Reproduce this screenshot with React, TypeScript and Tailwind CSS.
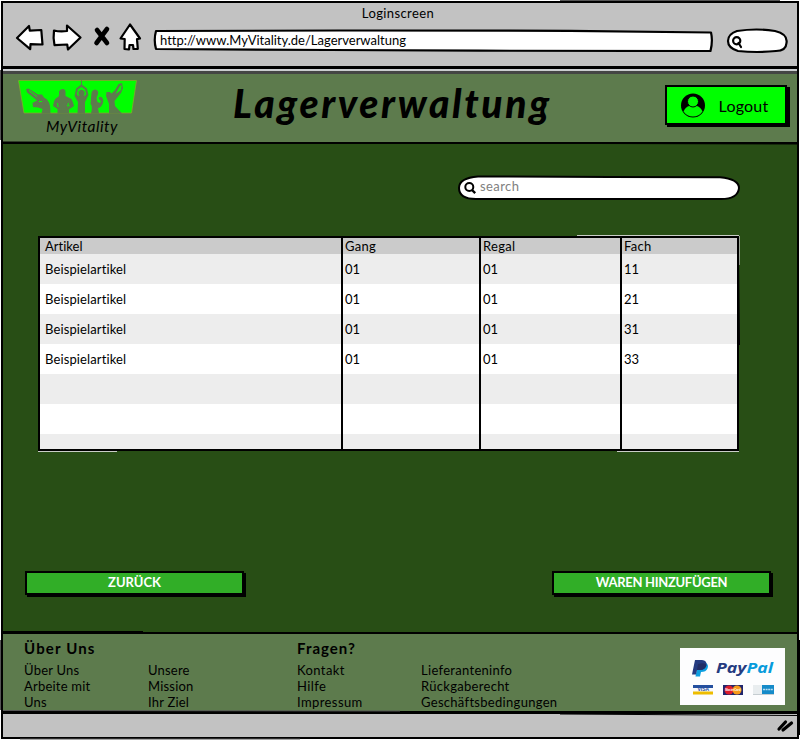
import type { ReactNode } from "react";

const rows = [
  ["Beispielartikel", "01", "01", "11"],
  ["Beispielartikel", "01", "01", "21"],
  ["Beispielartikel", "01", "01", "31"],
  ["Beispielartikel", "01", "01", "33"],
  ["", "", "", ""],
  ["", "", "", ""],
];

const columns = "grid grid-cols-[301px_138px_141px_1fr]";

function NavIcons() {
  return (
    <svg className="h-[32px] w-[130px] shrink-0" viewBox="14 21 130 32" fill="white" stroke="black" strokeWidth="2.2" strokeLinejoin="round">
      <path d="M17 37 29 25l.8 4.600 11.500-.6L42.500 43.500l-12-.4-.3 5Z" />
      <path d="M54 29.500Q60 31 67 30V24.500L80.500 36.500 68 48.500l-.8-5-12.700.6Q53 36.500 54 29.500Z" />
      <path d="m97 29 10 13M107 28 96.500 42" stroke="black" strokeWidth="4.600" strokeLinecap="round" />
      <path d="M130 23.500 140 37.500l-3 .6.800 9.700-4.300.2-.5-4h-3.500l-.5 4.500-4.500-.5.2-10-4.200-.5Z" />
    </svg>
  );
}

function AddressBar() {
  return (
    <div className="relative ml-[8px] flex h-[25px] w-[562px] items-center pl-[8px]">
      <svg className="absolute inset-0 h-full w-full" viewBox="152 28 562 25" fill="white" stroke="black" strokeWidth="2.2" strokeLinejoin="round">
        <path d="M156 32 340 31.500 570 31.800 711 33.500Q713 42 710.500 52L480 51.700 330 51 156 50Q153.500 41 156 32Z" />
      </svg>
      <span className="relative text-[13px] leading-[16px]">http://www.MyVitality.de/Lagerverwaltung</span>
    </div>
  );
}

function BrowserSearch() {
  return (
    <svg className="ml-[12px] h-[28px] w-[63px]" viewBox="726 26 63 28" fill="white" stroke="black" strokeWidth="2.2">
      <path d="M737 31Q757 28 775 31 788 34 786.500 43 786 51 776 51 757 53 738 51 728 48 728 41 728 34 737 31Z" />
      <circle cx="736.700" cy="40.800" r="3.600" fill="none" />
      <path d="m738.500 43 2.500 4" strokeLinecap="round" />
    </svg>
  );
}

function Logo() {
  return (
    <div className="w-[120px]">
      <svg className="block h-[34px] w-[119px]" viewBox="18 80 119 34">
        <path d="M18.500 80.500H136.500L131.500 113H24Z" fill="#00ff00" stroke="#8da82c" strokeWidth=".7" />
        <g fill="#5d7b4d">
          <path d="M41.500 113.500 42.500 109 38 107.500 33 107 32.500 103 37 100.500 27 92.500 26 89 28.500 88.500 38 94.500 42 94.500 44 97.500Q51 100 50.500 113.500Z" />
          <path d="m29 90.500 8 6M39 101.500h3" stroke="#00ff00" strokeWidth="1" />
          <path d="M59 95.500V91.500Q60 89 62.500 89 65.500 89 65.500 92V96L71.500 99Q73 102 74 106L69 109.500V113.500H57.500V109L53 106Q54 98 58 97Z" />
          <path d="m57.500 103 .5 4M68.500 103l-1 3 2-.5" stroke="#00ff00" strokeWidth=".9" fill="none" />
          <path d="M77.500 113.500 78 102 74.500 96 76 88.500 81 84.500V80.500H82V84.500L87 88.500 88.500 95 85 102V113.500Z" />
          <path d="M78.500 96 76.800 94 78 89.500 81.500 87 85 89.500 86.200 94 84.500 96Z" fill="#00ff00" />
          <path d="M79.500 97 78.500 94V91.500Q81.500 88 84.500 91.500V94L83.500 97Z" />
          <path d="M91 113.500Q93 106 90.500 104L91.500 93Q92 90 95 89.500 99 90 98 94L96.500 98 97.500 102 100 103 101 101.500 98.500 98.500Q99 96 101.500 97 104 99 103 103 101 108 98 108L99 113.500Z" />
          <path d="M109 113.500V104L106 96 106.500 92H110L111.500 93.500 115 90 118.500 84 122 83 123 88 121 93 114.500 101 115 106 122 113.500Z" />
          <path d="m115.500 94 4.500-8 1.500-1-.5 5Z" fill="#00ff00" />
        </g>
      </svg>
      <div className="ml-[28px] mt-[2px] h-[22px] text-[15.500px] leading-[20px] italic tracking-[0.5px]">MyVitality</div>
    </div>
  );
}

function SketchButton({ children, className }: { children: ReactNode; className: string }) {
  return (
    <button className={`relative flex items-center justify-center border-2 border-black ${className}`}>
      {children}
    </button>
  );
}

function SearchField() {
  return (
    <div className="relative flex h-[26px] w-[284px] items-center pl-[23px]">
      <svg className="absolute inset-0 h-full w-full" viewBox="457 175 284 26" fill="white" stroke="black" strokeWidth="2">
        <path d="M478 176.500 610 177 720 177.200Q739 179 739 188 738 199 721 199L476 199Q459 199 459 188 459 178 478 176.500Z" />
        <circle cx="469.300" cy="187" r="4" fill="none" />
        <path d="m472 190 3.200 3.200" strokeWidth="2.400" />
      </svg>
      <span className="relative -mt-[4px] text-[13px] leading-[16px] tracking-[0.4px] text-[#808080]">search</span>
    </div>
  );
}

function Table() {
  return (
    <div className="relative h-[215px] w-[701px] border-2 border-black bg-white text-[13px]">
      <div className={`${columns} h-[16px] bg-[#cbcbcb] leading-[17px]`}>
        {["Artikel", "Gang", "Regal", "Fach"].map((t, i) => (
          <div key={t} className={i ? "border-l-2 border-black pl-[2px] tracking-[0.3px]" : "pl-[5px]"}>{t}</div>
        ))}
      </div>
      {rows.map((row, r) => (
        <div key={r} className={`${columns} h-[30px] leading-[30px] ${r % 2 ? "bg-white" : "bg-[#ededed]"}`}>
          {row.map((t, i) => (
            <div key={i} className={i ? "border-l-2 border-black pl-[2px]" : "pl-[5px] tracking-[0.120px]"}>{t}</div>
          ))}
        </div>
      ))}
      <div className={`${columns} h-[15px] bg-[#ededed]`}>
        {[0, 1, 2, 3].map((i) => (
          <div key={i} className={i ? "border-l-2 border-black" : ""} />
        ))}
      </div>
      <svg className="absolute -top-[3px] -left-[3px] h-[217px] w-[703px]" viewBox="0 0 703 217" fill="none" strokeWidth="1">
        <path d="M540 .5H702M1 216.500H80M580 216.500H702" stroke="#c9cdc7" />
        <path d="M702.500 1V30" stroke="#9aa595" />
        <path d="m2 1.500 200 .5M701.500 20l1 90" stroke="black" />
      </svg>
    </div>
  );
}

function PayPal() {
  return (
    <div className="mt-[14px] flex h-[57px] w-[105px] flex-col bg-[#fdfdfe] pl-[12px] pt-[10px]">
      <div className="flex h-[20px] items-center">
        <svg className="h-[18px] w-[17px]" viewBox="0 0 17 18">
          <path d="M6 4h8q3 2 1.500 5.500Q14 13 9 13L8 17.500H3.500Z" fill="#0e9fe0" />
          <path d="M3 1h7q5 .3 4.500 5-1 5-7 5H5L4 15.500H0Z" fill="#253b80" />
          <path d="M6 5q7-2 8.500 1-1 5-7 5H5Z" fill="#222d65" />
        </svg>
        <span className="ml-[7px] flex origin-left scale-x-[1.220] font-['Open_Sans'] text-[14.500px] leading-[18px] font-bold italic"><span className="text-[#253b80]">Pay</span><span className="text-[#079bdc]">Pal</span></span>
      </div>
      <div className="ml-px mt-[7px] flex gap-[10px]">
        <svg className="h-[10px] w-[20px]" viewBox="0 0 20 10">
          <path d="M0 0h20v10H0Z" fill="#f8f9fc" /><path d="M0 0h20v3H0Z" fill="#244f9e" /><path d="M0 6.500h20v3H0Z" fill="#eebd00" />
          <text x="4.500" y="6.300" fontSize="5" fontWeight="bold" fill="#244f9e" fontFamily="Liberation Sans, sans-serif">VISA</text>
        </svg>
        <svg className="h-[10px] w-[20px]" viewBox="0 0 20 10">
          <path d="M0 0h20v10H0Z" fill="#20266d" /><circle cx="6" cy="5" r="4.500" fill="#dd1c2c" /><circle cx="14" cy="5" r="4.500" fill="#f79b19" />
          <text x="2.200" y="6" fontSize="3" textLength="15.500" lengthAdjust="spacingAndGlyphs" fontWeight="bold" fill="white" fontFamily="Liberation Sans, sans-serif">MasterCard</text>
        </svg>
        <svg className="h-[10px] w-[21px]" viewBox="0 0 21 10">
          <path d="M0 0h9v10H0Z" fill="#e9edef" /><path d="M9 0h12v9H9Z" fill="#168bc9" /><path d="M0 9.500h21" stroke="#c6cdd1" />
          <path d="M10 4.500h10" stroke="#b9ddf2" strokeWidth="1.500" strokeDasharray="2 .6" />
        </svg>
      </div>
    </div>
  );
}

function FooterColumn({ lines, className }: { lines: string[]; className: string }) {
  return (
    <div className={className}>
      {lines.map((l) => (
        <div key={l} className="whitespace-nowrap text-[13px] leading-[16px]">{l}</div>
      ))}
    </div>
  );
}

export default function App() {
  return (
    <div className="relative h-[740px] w-[800px] overflow-hidden bg-white pl-px pt-px font-[Lato,sans-serif] text-black [font-variant-ligatures:none]">
      <div className="flex h-[738px] w-[798px] flex-col border-2 border-black">
        <header className="h-[63px] shrink-0 bg-[#c2c2c2]">
          <div className="h-[19px] pr-[4px] pt-[2px] text-center text-[13px] leading-[16px] tracking-[0.4px]">Loginscreen</div>
          <div className="flex items-start pl-[11px]">
            <NavIcons />
            <div className="pt-[5px]"><AddressBar /></div>
            <div className="pt-[4px]"><BrowserSearch /></div>
          </div>
        </header>
        <div className="h-[8px] shrink-0 border-t-[3px] border-b-3 border-t-black border-b-[#444644] bg-[#cbced0]" />

        <section className="flex h-[70px] shrink-0 border-b-2 border-black bg-[#5d7b4d] pl-[15px]">
          <div className="pt-[6px]"><Logo /></div>
          <h1 className="ml-[95px] w-[324px] whitespace-nowrap pt-[7px] text-[39px] leading-[44px] font-black italic tracking-[2.650px]">Lagerverwaltung</h1>
          <div className="ml-auto mr-[10px] pt-[11px]">
            <SketchButton className="h-[40px] w-[122px] bg-[#00ff00] pr-[4px] shadow-[2px_2px_0_black,3px_2px_0_black]">
              <svg className="h-[26px] w-[26px]" viewBox="0 0 26 26">
                <circle cx="13" cy="13.500" r="12" />
                <path d="M3.500 19.500Q6 14 10 14h6q4 0 6.500 5.500-3.500 5-9.500 5-6 0-9.500-5Z" fill="#00ff00" />
                <circle cx="13" cy="9.500" r="5.500" fill="#00ff00" stroke="black" strokeWidth="1" />
              </svg>
              <span className="ml-[13px] pt-[2px] text-[16px] leading-[20px] tracking-[0.2px]">Logout</span>
            </SketchButton>
          </div>
        </section>

        <main className="flex h-[488px] shrink-0 flex-col bg-[#284e15] px-[22px]">
          <div className="ml-[432px] mt-[31px]"><SearchField /></div>
          <div className="ml-[13px] mt-[35px]"><Table /></div>
          <div className="mt-[120px] flex justify-between pr-[4px]">
            <SketchButton className="h-[24px] w-[219px] bg-[#31ae27] pb-[2px] text-[13px] leading-[16px] font-bold text-white shadow-[2px_2px_0_black]">ZURÜCK</SketchButton>
            <SketchButton className="h-[24px] w-[219px] bg-[#31ae27] pb-[2px] text-[13px] leading-[16px] font-bold tracking-[-0.300px] text-white shadow-[2px_2px_0_black]">WAREN HINZUFÜGEN</SketchButton>
          </div>
        </main>

        <footer className="flex h-[82px] shrink-0 border-y-2 border-b-3 border-black bg-[#5d7b4d] pl-[21px]">
          <div className="w-[273px] pt-[4px]">
            <h2 className="text-[15px] leading-[20px] font-bold tracking-[1.150px]">Über Uns</h2>
            <div className="flex pt-[4px]">
              <FooterColumn className="w-[124px] tracking-[0.22px]" lines={["Über Uns", "Arbeite mit", "Uns"]} />
              <FooterColumn className="w-[124px] tracking-[0.2px]" lines={["Unsere", "Mission", "Ihr Ziel"]} />
            </div>
          </div>
          <div className="w-[383px] pt-[4px]">
            <h2 className="text-[15px] leading-[20px] font-bold tracking-[1px]">Fragen?</h2>
            <div className="flex pt-[4px]">
              <FooterColumn className="w-[124px] tracking-[0.4px]" lines={["Kontakt", "Hilfe", "Impressum"]} />
              <FooterColumn className="w-[150px] tracking-[0.3px]" lines={["Lieferanteninfo", "Rückgaberecht", "Geschäftsbedingungen"]} />
            </div>
          </div>
          <PayPal />
        </footer>
        <div className="flex grow items-center justify-end bg-[#c2c2c2] pr-[1px]">
          <svg className="h-[17px] w-[20px]" viewBox="777 719 20 17" stroke="black" strokeWidth="3.200" strokeLinecap="round">
            <path d="m780 731 6.500-7M784 732l8.500-7" />
          </svg>
        </div>
      </div>
      <svg className="pointer-events-none absolute inset-0 h-[740px] w-[800px]" viewBox="0 0 800 740" fill="none" stroke="black" strokeWidth="1">
        <path d="M3 66.500H143M3 142l200 .5M600 143.500l197 .5M3 631.500h140M560 714l237 1.500" />
        <path d="M797.500 60 798.500 140M799.500 640V735M1.500 140V470" />
        <path d="M780 .5H560M.5 70V140M.5 640V710M300 739H20M3 710.500 400 711" stroke="#555" />
      </svg>
    </div>
  );
}
